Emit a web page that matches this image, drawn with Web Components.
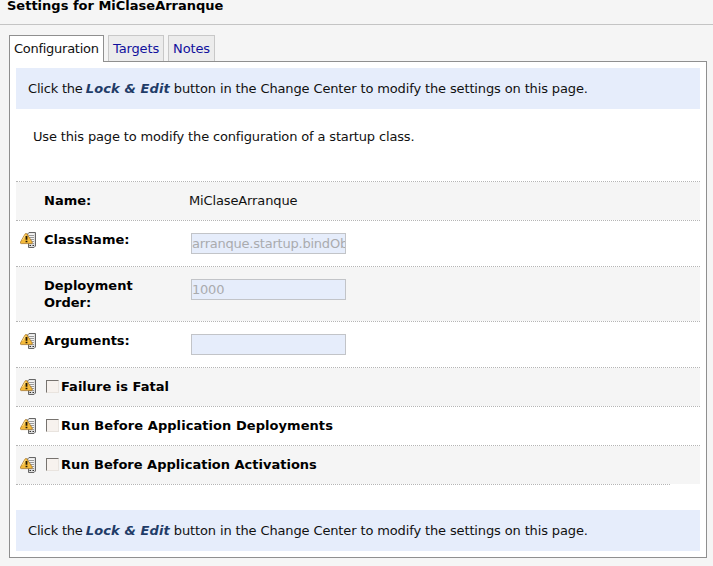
<!DOCTYPE html>
<html lang="en">
<head>
<meta charset="utf-8">
<title>Settings for MiClaseArranque</title>
<style>
html,body{margin:0;height:566px;overflow:hidden;background:#f5f5f5}
body{font:13px/17px "DejaVu Sans",sans-serif;letter-spacing:-.13px;color:#111}
</style>
</head>
<body>
<settings-page heading="Settings for MiClaseArranque">
  <tab-strip slot="tabs">
    <tab-item active>Configuration</tab-item>
    <tab-item>Targets</tab-item>
    <tab-item>Notes</tab-item>
  </tab-strip>
  <lock-notice></lock-notice>
  <page-intro>Use this page to modify the configuration of a startup class.</page-intro>
  <form-row shaded label="Name:" style="height:38px">MiClaseArranque</form-row>
  <form-row restart label="ClassName:" style="height:45px"><text-field value="arranque.startup.bindOb"></text-field></form-row>
  <form-row shaded label="Deployment Order:" style="height:54px"><text-field value="1000"></text-field></form-row>
  <form-row restart label="Arguments:" style="height:45px"><text-field></text-field></form-row>
  <check-row shaded>Failure is Fatal</check-row>
  <check-row style="letter-spacing:.06px">Run Before Application Deployments</check-row>
  <check-row shaded>Run Before Application Activations</check-row>
  <row-end></row-end>
  <lock-notice></lock-notice>
</settings-page>
<script>
function define(name, html) {
  customElements.define(name, class extends HTMLElement {
    connectedCallback() {
      if (this.shadowRoot) return;
      const root = this.attachShadow({mode: 'open'});
      root.innerHTML = html;
      root.querySelectorAll('[data-attr]').forEach(el => {
        el.textContent = this.getAttribute(el.dataset.attr) || '';
      });
    }
  });
}

define('settings-page', `<style>
:host{display:flex;flex-direction:column;height:566px}
h1{margin:0;padding-left:7px;font-size:13px;line-height:12px;letter-spacing:0;border-bottom:1px solid #c4c4c4;color:#000;box-sizing:border-box;height:25px}
nav{padding:10px 0 0 9px;height:26px}
main{box-sizing:border-box;width:698px;height:497px;margin-left:9px;padding:6px;border:1px solid #8f8f8f;background:#fff}
</style><h1 data-attr="heading"></h1><nav><slot name="tabs"></slot></nav><main><slot></slot></main>`);

define('tab-strip', `<style>:host{display:flex;gap:4px;position:relative}</style><slot></slot>`);

define('tab-item', `<style>
:host{display:block;box-sizing:border-box;height:26px;padding:4px 4px 0;border:1px solid #c8c8c8;border-bottom:0;background:#ececec;color:#11119c;white-space:nowrap}
:host([active]){width:95px;height:27px;background:#fff;border-color:#8f8f8f;color:#111;letter-spacing:-.27px}
</style><slot></slot>`);

define('lock-notice', `<style>
:host{display:block;box-sizing:border-box;height:41px;padding:12px;background:#e6edfb;white-space:nowrap}
em{font-weight:bold;color:#1f3c68;letter-spacing:.11px;margin-left:-.8px}
.lead{letter-spacing:-.2px}
</style><span class="lead">Click the </span><em>Lock &amp; Edit</em> button in the Change Center to modify the settings on this page.`);

define('page-intro', `<style>:host{display:block;box-sizing:border-box;height:72px;padding:19px 17px 0;letter-spacing:-.15px}</style><slot></slot>`);

define('restart-icon', `<style>:host,svg{display:block;width:17px;height:17px}</style>
<svg viewBox="0 0 17 17">
<path d="M7.5 2L9 .5H15.5V14L14 15.5H8.5V10Z" fill="#ddd" stroke="#666"/>
<path d="M9 1.5H14V12H9Z" fill="#f4f4f4"/>
<path d="M9 3.5H14M9 5.5H14M9 7.5H14M9 9.5H14M9 11.5H14" stroke="#999"/>
<path d="M9.5 13.5H11M12.5 13.5H14" stroke="#333"/>
<path d="M6 1.4Q6.8 1.4 7.2 2.3L12.2 10Q12.6 11.6 11.2 11.6H1.2Q-.1 11.6.5 10L4.9 2.3Q5.3 1.4 6 1.4Z" fill="#f4ba3a" stroke="#a87830" stroke-width=".8"/>
<path d="M5.5 2.8L2.5 8" stroke="#ffe9a0" stroke-width=".8"/>
<path d="M6.5 4V7.8M6.5 8.7V10.3" stroke="#211704" stroke-width="1.8"/>
</svg>`);

const rowStyle = `
:host{display:flex;border-top:1px dotted #b5b5b5;background:#fff;background-clip:padding-box}
:host([shaded]){background-color:#f5f5f5}
restart-icon{margin:11px 0 0 4px}
b{color:#000}`;

define('form-row', `<style>${rowStyle}
:host(:not([restart])) restart-icon{visibility:hidden}
b{box-sizing:border-box;width:118px;margin:10px 27px 0 7px;letter-spacing:0}
div{padding-top:10px}
</style><restart-icon></restart-icon><b data-attr="label"></b><div><slot></slot></div>`);

define('text-field', `<style>
:host{display:block;box-sizing:border-box;width:155px;height:21px;margin:2px 0 0 2px;padding:1px 0 0;border:1px solid #c2c4c8;background:#e6edfb;color:#aaabae;letter-spacing:-.22px;overflow:hidden;white-space:nowrap}
</style><span data-attr="value"></span>`);

define('check-row', `<style>${rowStyle}
:host{height:38px;letter-spacing:0}
i{box-sizing:border-box;width:13px;height:13px;margin:12px 2px 0 9px;border:1px solid #e9e4df;border-top-color:#77736f;border-left-color:#77736f;background:#f7f2ee}
b{margin-top:10px}
</style><restart-icon></restart-icon><i></i><b><slot></slot></b>`);

define('row-end', `<style>:host{display:block;width:654px;height:25px;border-top:1px dotted #b5b5b5}</style>`);
</script>
</body>
</html>
